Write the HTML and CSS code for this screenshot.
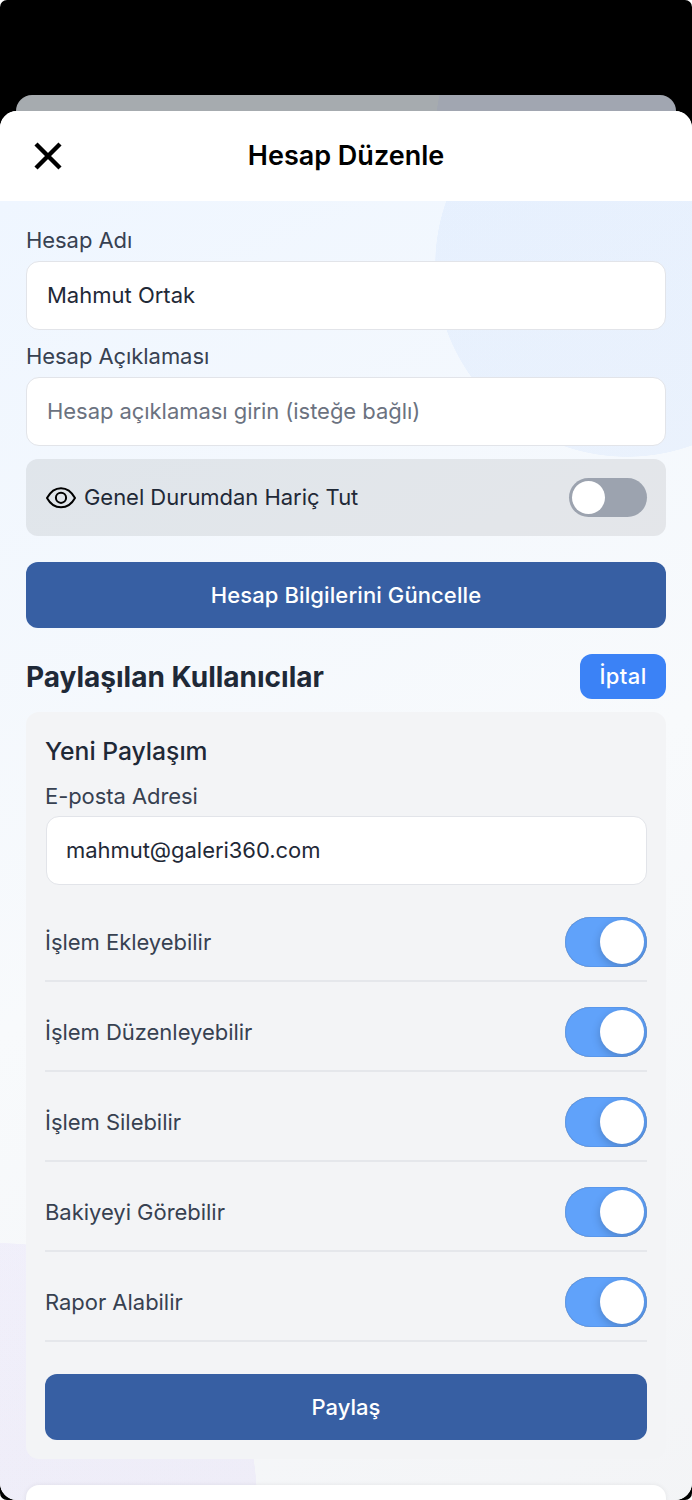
FILE: index.html
```html
<!DOCTYPE html>
<html lang="tr">
<head>
<meta charset="utf-8">
<title>Hesap Düzenle</title>
<link rel="stylesheet" href="styles.css">
</head>
<body>
<div class="screen">
  <div class="sheet-behind"></div>
  <div class="sheet">
    <header class="header">
      <svg class="close" viewBox="0 0 28 28"><path d="M2 2 26 26M26 2 2 26" stroke="#000" stroke-width="4.4" fill="none"/></svg>
      <h1 class="header-title">Hesap Düzenle</h1>
    </header>
    <main class="content">
      <div class="label">Hesap Adı</div>
      <div class="input">Mahmut Ortak</div>
      <div class="label label-next">Hesap Açıklaması</div>
      <div class="input placeholder">Hesap açıklaması girin (isteğe bağlı)</div>
      <div class="exclude">
        <svg class="eye" viewBox="0 0 30 22"><path d="M1 11C4 5.500 9 1.200 15 1.200S26 5.500 29 11C26 16.500 21 20.300 15 20.300S4 16.500 1 11Z" fill="none" stroke="#000" stroke-width="2" stroke-linejoin="round"/><circle cx="15" cy="10.800" r="5.100" fill="none" stroke="#000" stroke-width="2"/></svg>
        <span class="exclude-text">Genel Durumdan Hariç Tut</span>
        <span class="toggle-off"></span>
      </div>
      <div class="button update">Hesap Bilgilerini Güncelle</div>
      <div class="section-head">
        <h2 class="section-title">Paylaşılan Kullanıcılar</h2>
        <div class="cancel">İptal</div>
      </div>
      <section class="card">
        <h3 class="card-title">Yeni Paylaşım</h3>
        <div class="card-label">E-posta Adresi</div>
        <div class="input card-input">mahmut@galeri360.com</div>
        <div class="rows">
          <div class="row"><span>İşlem Ekleyebilir</span><span class="toggle-on"></span></div>
          <div class="row"><span>İşlem Düzenleyebilir</span><span class="toggle-on"></span></div>
          <div class="row"><span>İşlem Silebilir</span><span class="toggle-on"></span></div>
          <div class="row"><span>Bakiyeyi Görebilir</span><span class="toggle-on"></span></div>
          <div class="row"><span>Rapor Alabilir</span><span class="toggle-on"></span></div>
        </div>
        <div class="button share">Paylaş</div>
      </section>
      <div class="next-card"></div>
    </main>
  </div>
</div>
</body>
</html>
```
FILE: styles.css
```css
* { box-sizing: border-box; }
body { margin: 0; background: #fff; font-family: Inter, "Liberation Sans", sans-serif; }
h1, h2, h3 { margin: 0; }
.screen { width: 692px; height: 1500px; background: #000; overflow: hidden; padding-top: 95px; display: flex; flex-direction: column; border-radius: 7px; }
.sheet-behind { height: 32px; margin: 0 16px -16px; flex: none; border-radius: 16px 16px 0 0; background: radial-gradient(circle 190px at 609px 40px, #a1a6b1 189.5px, transparent 190px), #a6abaf; }
.sheet { position: relative; flex: 1; display: flex; flex-direction: column; border-radius: 17px; overflow: hidden; background: #fff; }
.header { height: 90px; flex: none; display: grid; grid-template-columns: 1fr auto 1fr; align-items: center; background: #fff; }
.close { width: 28px; height: 28px; margin-left: 34px; }
.header-title { font-size: 27px; font-weight: 600; line-height: 32px; }
.content { flex: 1; padding: 24px 26px 0; color: #1f2937;
  background:
    radial-gradient(circle 192px at 627px 64px, rgba(59,130,246,.06) 191.5px, transparent 192px),
    radial-gradient(circle 256px at 1px 1298px, rgba(139,92,246,.06) 255.5px, transparent 256px),
    linear-gradient(155deg, #eff6ff 0%, #f8fafc 50%, #f3f4f6 100%); }
.label { height: 36px; line-height: 31px; font-size: 22px; color: #374151; letter-spacing: -.06px; }
.label-next { margin-top: 11px; }
.input { height: 69px; border: 1.500px solid #e2e4e9; border-radius: 13px; background: #fff; display: flex; align-items: center; padding: 0 20px 2px; font-size: 22px; color: #1f2937; }
.placeholder { color: #6b7280; letter-spacing: -.05px; }
.exclude { display: flex; align-items: center; height: 77px; margin-top: 13px; padding: 0 19px 0 20px; border-radius: 12px; background: rgba(107,100,100,.125); font-size: 22px; }
.eye { width: 30px; height: 22px; }
.exclude-text { flex: 1; margin-left: 8px; padding-bottom: 2px; letter-spacing: -.04px; }
.toggle-off { width: 78px; height: 39px; border-radius: 20px; padding: 3px; background: #9ca3af; }
.toggle-off::before { content: ""; display: block; width: 33px; height: 33px; border-radius: 50%; background: #fff; }
.button { height: 66px; margin-top: 26px; border-radius: 12px; background: #375fa3; color: #fff; display: flex; align-items: center; justify-content: center; font-size: 22px; font-weight: 500; }
.update { letter-spacing: .1px; padding-bottom: 1px; }
.section-head { height: 45px; margin-top: 26px; display: flex; align-items: center; justify-content: space-between; }
.section-title { font-size: 28px; font-weight: 700; }
.cancel { width: 86px; height: 45px; border-radius: 12px; background: #3b82f6; color: #fff; font-size: 22px; font-weight: 500; letter-spacing: .4px; padding-bottom: 2px; display: flex; align-items: center; justify-content: center; }
.card { margin-top: 13px; height: 747px; border-radius: 13px; background: #f3f4f6; padding: 20px 19px 0; }
.card-title { height: 38px; line-height: 38px; font-size: 24.700px; font-weight: 500; }
.card-label { height: 46px; line-height: 53px; font-size: 22px; color: #374151; letter-spacing: -.07px; }
.card-input { margin: 0 0 0 1px; padding-left: 19px; letter-spacing: -.04px; }
.rows { margin-top: 7px; }
.row { height: 90px; padding-top: 12px; border-bottom: 2px solid #e5e7eb; display: flex; align-items: center; justify-content: space-between; font-size: 22px; color: #374151; letter-spacing: -.03px; }
.toggle-on { width: 82px; height: 50px; border-radius: 25px; background: #60a2fa; padding: 3px; overflow: hidden; box-shadow: inset 0 0 1px rgba(30,60,110,.9); }
.toggle-on::before { content: ""; display: block; width: 44px; height: 44px; margin-left: auto; border-radius: 50%; background: #fff; box-shadow: 0 3px 10px rgba(0,0,0,.2); }
.share { margin-top: 32px; }
.next-card { height: 60px; margin-top: 26px; border-radius: 13px; background: #fff; box-shadow: 0 0 5px rgba(0,0,0,.07); }
```
